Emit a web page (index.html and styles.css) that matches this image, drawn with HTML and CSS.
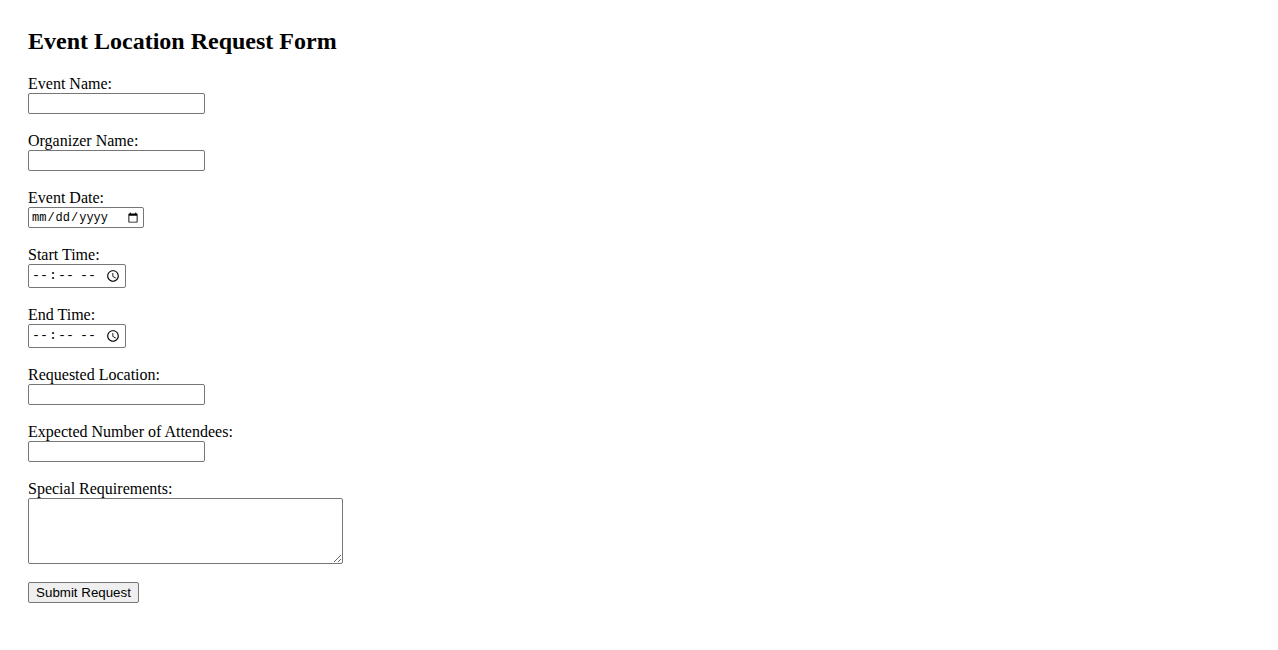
FILE: index.html
```html
<!DOCTYPE html>
<html lang="en">
<head>
<meta charset="utf-8">
<title>Event Location Request Form</title>
<link rel="stylesheet" href="styles.css">
</head>
<body>
<div class="page">
  <h2 class="title">Event Location Request Form</h2>
  <form class="form">
    <div class="field">
      <label class="label" for="eventName">Event Name:</label>
      <input class="text-input" type="text" id="eventName">
    </div>
    <div class="field">
      <label class="label" for="organizer">Organizer Name:</label>
      <input class="text-input" type="text" id="organizer">
    </div>
    <div class="field">
      <label class="label" for="date">Event Date:</label>
      <input class="date-input" type="date" id="date">
    </div>
    <div class="field">
      <label class="label" for="start">Start Time:</label>
      <input class="time-input" type="time" id="start">
    </div>
    <div class="field">
      <label class="label" for="end">End Time:</label>
      <input class="time-input" type="time" id="end">
    </div>
    <div class="field">
      <label class="label" for="loc">Requested Location:</label>
      <input class="text-input" type="text" id="loc">
    </div>
    <div class="field">
      <label class="label" for="att">Expected Number of Attendees:</label>
      <input class="text-input" type="number" id="att">
    </div>
    <div class="field">
      <label class="label" for="req">Special Requirements:</label>
      <textarea class="textarea" id="req"></textarea>
    </div>
    <button class="submit" type="submit">Submit Request</button>
  </form>
</div>
</body>
</html>
```

FILE: styles.css
```css
html, body {
  margin: 0;
  padding: 0;
  background: #ffffff;
}

body {
  font-family: "Liberation Serif", "Times New Roman", serif;
  font-size: 16px;
  color: #000000;
}

.page {
  padding: 28px;
}

.title {
  margin: 0 0 20px;
  font-size: 24px;
  font-weight: bold;
  line-height: 27px;
}

.form {
  display: flex;
  flex-direction: column;
  align-items: flex-start;
}

.field {
  display: flex;
  flex-direction: column;
  align-items: flex-start;
  margin-bottom: 18px;
}

.label {
  display: block;
  line-height: 18px;
  height: 18px;
}

.text-input,
.date-input,
.time-input,
.textarea {
  box-sizing: border-box;
  margin: 0;
  border: 1px solid #767676;
  border-radius: 2px;
  background: #ffffff;
}

.text-input {
  width: 177px;
  height: 21px;
  padding: 1px 2px;
  font-family: "Liberation Sans", Arial, sans-serif;
  font-size: 13.33px;
}

.date-input {
  width: 116px;
  height: 21px;
  padding: 1px 2px;
  font-family: "Liberation Mono", "DejaVu Sans Mono", monospace;
  font-size: 12px;
}

.time-input {
  width: 98px;
  height: 24px;
  padding: 1px 2px;
  font-family: "Liberation Mono", "DejaVu Sans Mono", monospace;
  font-size: 13.33px;
}

.textarea {
  width: 315px;
  height: 66px;
  padding: 2px;
  resize: both;
  font-family: "Liberation Mono", monospace;
  font-size: 13.33px;
}

.submit {
  box-sizing: border-box;
  margin: 0;
  width: 111px;
  height: 21px;
  padding: 1px 6px;
  border: 1px solid #767676;
  border-radius: 2px;
  background: #efefef;
  color: #000000;
  font-family: "Liberation Sans", Arial, sans-serif;
  font-size: 13.33px;
}
```
